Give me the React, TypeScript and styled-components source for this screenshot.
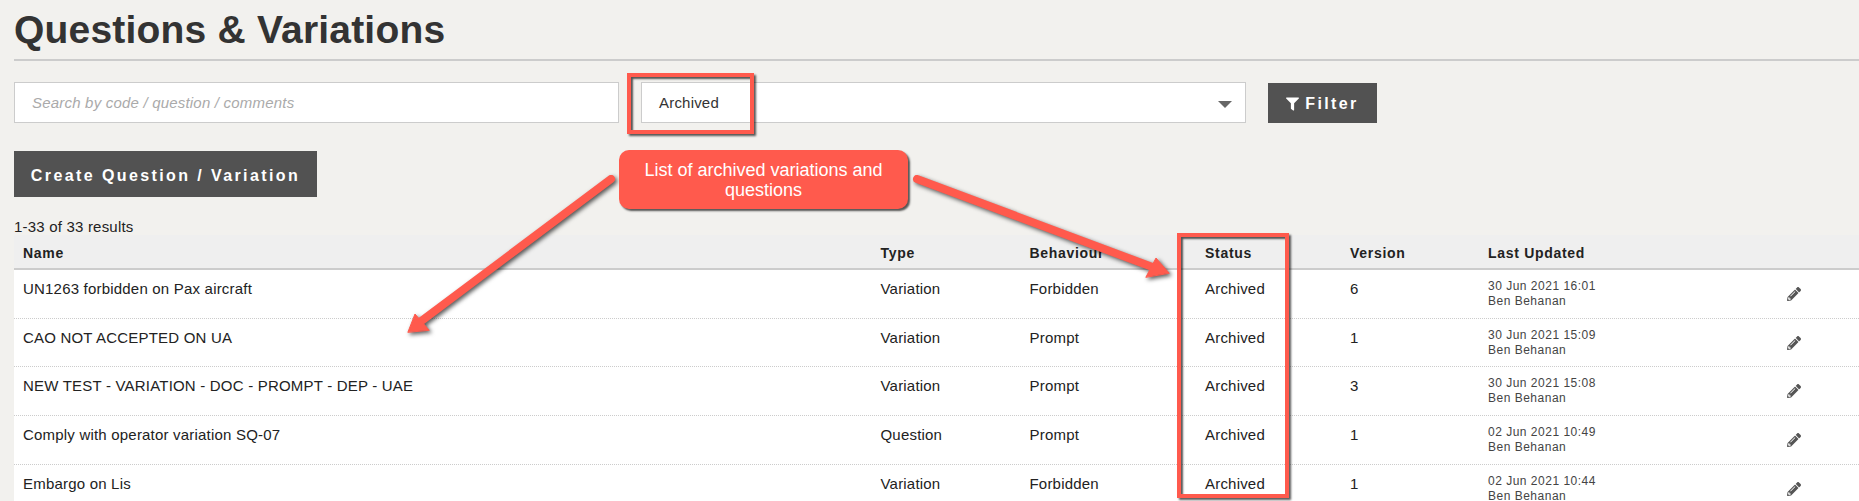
import React from "react";
import styled, { createGlobalStyle } from "styled-components";
import { FaFilter, FaPencilAlt } from "react-icons/fa";

const Global = createGlobalStyle`
  html, body { margin: 0; padding: 0; background: #f2f1ee; }
  body { width: 1859px; height: 501px; overflow: hidden; font-family: "Liberation Sans", Arial, sans-serif; color: #222; }
`;

const Page = styled.div`
  position: relative;
  height: 501px;
  overflow: hidden;
  padding-left: 14px;
`;
const Heading = styled.h1`
  margin: 0;
  height: 59px;
  line-height: 59px;
  font-size: 39px;
  letter-spacing: 0.2px;
  font-weight: 700;
  color: #333;
  border-bottom: 2px solid #ccc;
`;
const FilterBar = styled.div`
  display: flex;
  align-items: flex-start;
  margin-top: 21px;
`;
const SearchInput = styled.input`
  box-sizing: border-box;
  width: 605px;
  height: 41px;
  padding: 0 17px;
  background: #fff;
  border: 1px solid #ccc;
  border-radius: 0;
  outline: none;
  font: italic 15px "Liberation Sans", Arial, sans-serif;
  letter-spacing: 0.2px;
  &::placeholder { color: #aaa; opacity: 1; }
`;
const SelectBox = styled.div`
  box-sizing: border-box;
  width: 605px;
  height: 41px;
  margin-left: 22px;
  padding: 0 13px 0 17px;
  display: flex;
  align-items: center;
  justify-content: space-between;
  background: #fff;
  border: 1px solid #ccc;
  font-size: 15px;
  letter-spacing: 0.2px;
  color: #333;
`;
const Caret = styled.span`
  width: 0;
  height: 0;
  margin-top: 3px;
  border-left: 7px solid transparent;
  border-right: 7px solid transparent;
  border-top: 7px solid #666;
`;
const DarkButton = styled.button`
  display: inline-flex;
  align-items: center;
  justify-content: center;
  box-sizing: border-box;
  border: 0;
  background: #525252;
  color: #fff;
  font: 700 16px "Liberation Sans", Arial, sans-serif;
  letter-spacing: 2.4px;
`;
const FilterButton = styled(DarkButton)`
  width: 109px;
  height: 40px;
  margin: 1px 0 0 22px;
  padding: 1px 0 0;
  gap: 6px;
  svg { width: 13px; height: 14px; }
`;
const CreateButton = styled(DarkButton)`
  display: flex;
  width: 303px;
  height: 46px;
  margin-top: 28px;
  padding: 3px 0 0;
`;
const Results = styled.div`
  margin-top: 20px;
  height: 18px;
  line-height: 20px;
  font-size: 15px;
  letter-spacing: 0.2px;
  color: #222;
`;
const columns = "857.5px 149px 175.5px 145px 138px 281px 1fr";
const HeaderRow = styled.div`
  display: grid;
  grid-template-columns: ${columns};
  box-sizing: border-box;
  height: 35px;
  padding-top: 2px;
  align-items: center;
  background: #efefef;
  border-bottom: 2px solid #ccc;
  font-size: 14px;
  font-weight: 700;
  letter-spacing: 0.7px;
  color: #222;
`;
const HeadCell = styled.div`
  padding-left: 9px;
`;
const Row = styled.div`
  display: grid;
  grid-template-columns: ${columns};
  box-sizing: border-box;
  height: 48.67px;
  background: #fff;
  border-bottom: 1px dotted #ccc;
  font-size: 15px;
  letter-spacing: 0.2px;
  color: #222;
`;
const Cell = styled.div`
  padding: 9px 0 0 9px;
  line-height: 20px;
`;
const Updated = styled.div`
  padding: 9px 0 0 9px;
  font-size: 12px;
  letter-spacing: 0.5px;
  line-height: 15px;
  color: #444;
`;
const Action = styled.div`
  padding: 17px 0 0 27px;
  color: #555;
  svg { display: block; width: 14px; height: 14px; }
`;
const Mark = styled.div<{ $x: number; $y: number; $w: number; $h: number }>`
  position: absolute;
  box-sizing: border-box;
  left: ${(p) => p.$x}px;
  top: ${(p) => p.$y}px;
  width: ${(p) => p.$w}px;
  height: ${(p) => p.$h}px;
  border: 4px solid #ff5a4d;
  box-shadow: 2px 2px 2px rgba(0, 0, 0, 0.65), inset 2px 2px 2px rgba(0, 0, 0, 0.65);
`;
const Callout = styled.div`
  position: absolute;
  box-sizing: border-box;
  left: 619px;
  top: 150px;
  width: 289px;
  height: 59px;
  padding: 10px 12px 0;
  background: #ff5a4d;
  border-radius: 10px;
  box-shadow: 2px 2px 2px rgba(0, 0, 0, 0.65);
  color: #fff;
  font-size: 18px;
  line-height: 20px;
  text-align: center;
`;
const ArrowLayer = styled.svg`
  position: absolute;
  left: 0;
  top: 0;
  filter: drop-shadow(2px 2px 2px rgba(0, 0, 0, 0.65));
`;

const rows = [
  ["UN1263 forbidden on Pax aircraft", "Variation", "Forbidden", "6", "30 Jun 2021 16:01"],
  ["CAO NOT ACCEPTED ON UA", "Variation", "Prompt", "1", "30 Jun 2021 15:09"],
  ["NEW TEST - VARIATION - DOC - PROMPT - DEP - UAE", "Variation", "Prompt", "3", "30 Jun 2021 15:08"],
  ["Comply with operator variation SQ-07", "Question", "Prompt", "1", "02 Jun 2021 10:49"],
  ["Embargo on Lis", "Variation", "Forbidden", "1", "02 Jun 2021 10:44"],
];
const heads = ["Name", "Type", "Behaviour", "Status", "Version", "Last Updated", ""];

export default function App() {
  return (
    <Page>
      <Global />
      <Heading>Questions &amp; Variations</Heading>
      <FilterBar>
        <SearchInput placeholder="Search by code / question / comments" />
        <SelectBox>
          Archived
          <Caret />
        </SelectBox>
        <FilterButton>
          <FaFilter />
          Filter
        </FilterButton>
      </FilterBar>
      <CreateButton>Create Question / Variation</CreateButton>
      <Results>1-33 of 33 results</Results>
      <HeaderRow>
        {heads.map((h) => (
          <HeadCell key={h}>{h}</HeadCell>
        ))}
      </HeaderRow>
      {rows.map((r) => (
        <Row key={r[0]}>
          <Cell>{r[0]}</Cell>
          <Cell>{r[1]}</Cell>
          <Cell>{r[2]}</Cell>
          <Cell>Archived</Cell>
          <Cell>{r[3]}</Cell>
          <Updated>
            {r[4]}
            <br />
            Ben Behanan
          </Updated>
          <Action>
            <FaPencilAlt />
          </Action>
        </Row>
      ))}
      <ArrowLayer width="1859" height="501" viewBox="0 0 1859 501">
        <g fill="#ff5a4d" stroke="#ff5a4d" strokeLinecap="round" strokeLinejoin="round">
          <line x1="611" y1="179" x2="420" y2="322" strokeWidth="8" />
          <polygon points="408,332 415,314 429,330" strokeWidth="1" />
          <line x1="917" y1="179" x2="1155" y2="268" strokeWidth="8" />
          <polygon points="1169,273 1156,258 1146,277" strokeWidth="1" />
        </g>
      </ArrowLayer>
      <Mark $x={627} $y={73} $w={127} $h={61} />
      <Mark $x={1177} $y={233} $w={112} $h={265} />
      <Callout>List of archived variations and questions</Callout>
    </Page>
  );
}
